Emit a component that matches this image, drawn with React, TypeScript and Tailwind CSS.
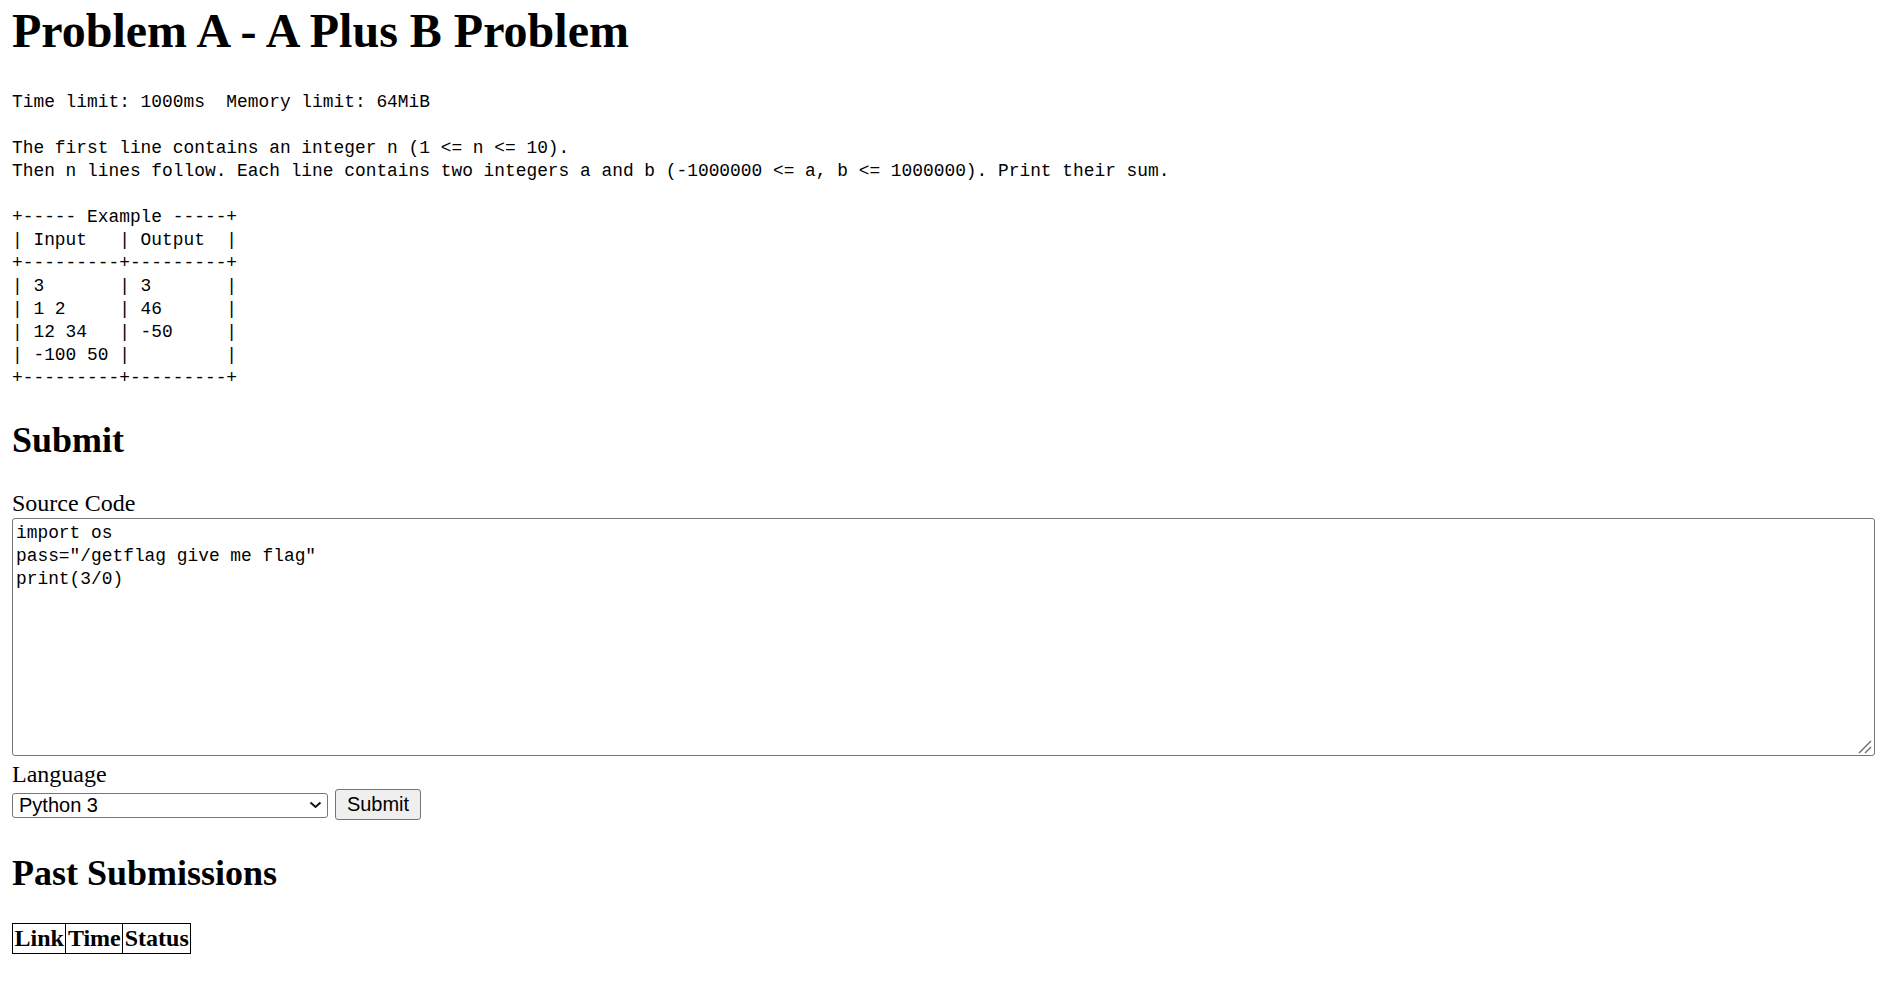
import { useState } from 'react'

const statement = `Time limit: 1000ms  Memory limit: 64MiB

The first line contains an integer n (1 <= n <= 10).
Then n lines follow. Each line contains two integers a and b (-1000000 <= a, b <= 1000000). Print their sum.

+----- Example -----+
| Input   | Output  |
+---------+---------+
| 3       | 3       |
| 1 2     | 46      |
| 12 34   | -50     |
| -100 50 |         |
+---------+---------+`

const initialCode = `import os
pass="/getflag give me flag"
print(3/0)`

export default function App() {
  const [code, setCode] = useState(initialCode)
  const [lang, setLang] = useState('python3')

  return (
    <div className="min-h-screen bg-white px-[12px] font-['Liberation_Serif',serif] text-black">
      {/* Title */}
      <h1 className="mt-[3px] mb-[32.5px] text-[48px] leading-[55px] font-bold">Problem A - A Plus B Problem</h1>

      {/* Statement */}
      <pre className="m-0 font-['Liberation_Mono',monospace] text-[17.87px] leading-[23px] whitespace-pre">{statement}</pre>

      {/* Submit form */}
      <h2 className="mt-[30.6px] text-[36px] leading-[41px] font-bold">Submit</h2>
      <form onSubmit={(e) => e.preventDefault()}>
        <label className="mt-[29px] block text-[24px] leading-[27px]">Source Code</label>
        <div className="relative mt-[0.8px] h-[238px] w-[1863px]">
          <textarea
            value={code}
            onChange={(e) => setCode(e.target.value)}
            spellCheck={false}
            className="block h-full w-full resize-none rounded-[3px] border border-[#767676] bg-white px-[3px] py-[3px] font-['Liberation_Mono',monospace] text-[17.87px] leading-[23px] text-black outline-none"
          />
          <svg className="pointer-events-none absolute right-[3px] bottom-[2px]" width="14" height="14" viewBox="0 0 14 14">
            <line x1="1" y1="13" x2="13" y2="1" stroke="#6e6e6e" strokeWidth="1.4" />
            <line x1="7" y1="13" x2="13" y2="7" stroke="#6e6e6e" strokeWidth="1.4" />
          </svg>
        </div>

        <label className="mt-[5.6px] block text-[24px] leading-[27px]">Language</label>
        <div className="mt-[1px] flex items-start gap-[7px]">
          <div className="relative mt-[4px] h-[25px] w-[316px]">
            <select
              value={lang}
              onChange={(e) => setLang(e.target.value)}
              className="block h-full w-full appearance-none rounded-[3px] border border-[#767676] bg-white pl-[6px] font-['Liberation_Sans',sans-serif] text-[20px] leading-[23px] text-black outline-none"
            >
              <option value="python3">Python 3</option>
              <option value="cpp">C++</option>
            </select>
            <svg className="pointer-events-none absolute top-[8px] right-[6px]" width="13" height="8" viewBox="0 0 13 8">
              <path d="M1.5 1.5 L6.5 6 L11.5 1.5" fill="none" stroke="#111" strokeWidth="2" />
            </svg>
          </div>
          <button
            type="submit"
            className="h-[31px] w-[86px] rounded-[3px] border border-[#767676] bg-[#efefef] font-['Liberation_Sans',sans-serif] text-[20px] leading-[23px] text-black"
          >
            Submit
          </button>
        </div>
      </form>

      {/* Past submissions */}
      <h2 className="mt-[32.5px] text-[36px] leading-[41px] font-bold">Past Submissions</h2>
      <table className="mt-[29.5px] border-collapse border border-black">
        <thead>
          <tr>
            <th className="border border-black px-[1.5px] py-[1px] text-[24px] leading-[27px] font-bold">Link</th>
            <th className="border border-black px-[1.5px] py-[1px] text-[24px] leading-[27px] font-bold">Time</th>
            <th className="border border-black px-[1.5px] py-[1px] text-[24px] leading-[27px] font-bold">Status</th>
          </tr>
        </thead>
        <tbody></tbody>
      </table>
    </div>
  )
}
